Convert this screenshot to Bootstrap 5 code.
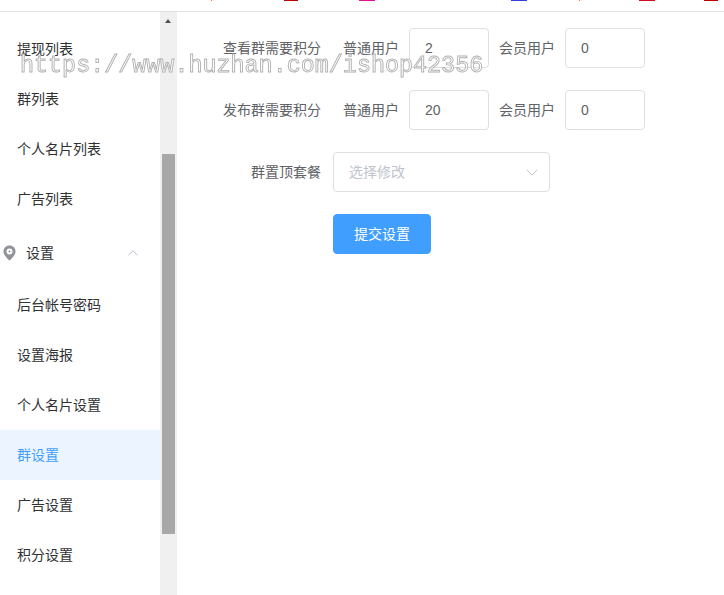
<!doctype html>
<html lang="zh"><head><meta charset="utf-8">
<link href="https://cdn.jsdelivr.net/npm/bootstrap@5.3.0/dist/css/bootstrap.min.css" rel="stylesheet">
<style>
html,body{height:100%;overflow:hidden}
body{font-family:"Liberation Sans","Noto Sans CJK SC",sans-serif;font-size:14px;color:#606266;background:#fff;position:relative;width:724px;height:595px}
.top-strip{height:12px;border-bottom:1px solid #e0e0e0;position:relative}
.tick{position:absolute;top:0;height:1px}
.shell{height:583px}
.side{width:160px;overflow:hidden}
.side-rail{width:17px;background:#f0f0f0;position:relative}
.rail-arrow{position:absolute;left:5px;top:7px;width:0;height:0;border-left:3.5px solid transparent;border-right:3.5px solid transparent;border-bottom:4px solid #505050}
.rail-thumb{position:absolute;left:2px;top:142px;width:13px;height:380px;background:#a8a8a8}
.menu-item{height:50px;line-height:50px;padding-left:17px;color:#303133;white-space:nowrap}
.menu-item.on{background:#ecf5ff;color:#409eff}
.menu-head{height:56px;color:#303133;padding:2px 22px 0 3px}
.menu-head span{margin-left:10px;flex:1}
.pane{padding:16px 0 0 0}
.frow{height:40px;margin-bottom:22px}
.flabel{width:144px;text-align:right;white-space:nowrap}
.ulabel{margin-left:22px;margin-right:10px;white-space:nowrap}
.ulabel2{margin-left:10px;margin-right:10px;white-space:nowrap}
.inbox{width:80px;height:40px;border:1px solid #dcdfe6;border-radius:4px;padding:0 15px;line-height:38px;color:#606266}
.sel{width:217px;height:40px;border:1px solid #dcdfe6;border-radius:4px;padding:0 11px 0 15px;color:#c0c4cc;margin-left:12px}
.go{width:98px;height:40px;background:#409eff;border:1px solid #409eff;color:#fff;font-size:14px;border-radius:4px;padding:0;margin-left:156px}
.go:hover{background:#409eff;color:#fff}
.wm{position:absolute;left:20px;top:49px;font-family:"Liberation Mono",monospace;font-size:23.4px;line-height:34px;color:#fff;-webkit-text-stroke:.9px #b0b0b0;white-space:nowrap;pointer-events:none;will-change:transform}
</style></head><body>
<div class="top-strip">
<i class="tick" style="left:211px;width:1px;background:#f07030"></i>
<i class="tick" style="left:284px;width:14px;background:#c00000"></i>
<i class="tick" style="left:359px;width:16px;background:#e0109a"></i>
<i class="tick" style="left:511px;width:16px;background:#3040e0"></i>
<i class="tick" style="left:579px;width:1px;background:#f07030"></i>
<i class="tick" style="left:639px;width:16px;background:#d01020"></i>
<i class="tick" style="left:704px;width:14px;background:#c00000"></i>
</div>
<div class="shell d-flex">
<nav class="side flex-shrink-0">
<div class="menu-item" style="margin-top:12px">提现列表</div>
<div class="menu-item">群列表</div>
<div class="menu-item">个人名片列表</div>
<div class="menu-item">广告列表</div>
<div class="menu-head d-flex align-items-center">
<svg width="13" height="16" viewBox="0 0 13 16"><path fill="#909399" fill-rule="evenodd" d="M6.5.5C3 .5.5 3 .5 6.400c0 3.600 3.400 6.900 6 9.100 2.600-2.200 6-5.500 6-9.100C12.500 3 10 .5 6.500.5zm0 3a3 3 0 1 1 0 6 3 3 0 0 1 0-6z"/><circle cx="6.500" cy="6.500" r="1" fill="#909399"/></svg>
<span>设置</span>
<svg width="10" height="6" viewBox="0 0 10 6"><path d="M.5 5.200 5 .8l4.500 4.400" fill="none" stroke="#b4bccc" stroke-width="1"/></svg>
</div>
<div class="menu-item">后台帐号密码</div>
<div class="menu-item">设置海报</div>
<div class="menu-item">个人名片设置</div>
<div class="menu-item on">群设置</div>
<div class="menu-item">广告设置</div>
<div class="menu-item">积分设置</div>
</nav>
<div class="side-rail flex-shrink-0"><i class="rail-arrow"></i><i class="rail-thumb"></i></div>
<main class="pane flex-grow-1">
<div class="frow d-flex align-items-center"><div class="flabel">查看群需要积分</div><div class="ulabel">普通用户</div><div class="inbox">2</div><div class="ulabel2">会员用户</div><div class="inbox">0</div></div>
<div class="frow d-flex align-items-center"><div class="flabel">发布群需要积分</div><div class="ulabel">普通用户</div><div class="inbox">20</div><div class="ulabel2">会员用户</div><div class="inbox">0</div></div>
<div class="frow d-flex align-items-center"><div class="flabel">群置顶套餐</div><div class="sel d-flex align-items-center justify-content-between"><span>选择修改</span><svg width="12" height="7" viewBox="0 0 12 7"><path d="M1 1l5 5 5-5" fill="none" stroke="#c0c4cc" stroke-width="1"/></svg></div></div>
<button type="button" class="btn go">提交设置</button>
</main>
</div>
<div class="wm">https://www.huzhan.com/ishop42356</div>
</body></html>
